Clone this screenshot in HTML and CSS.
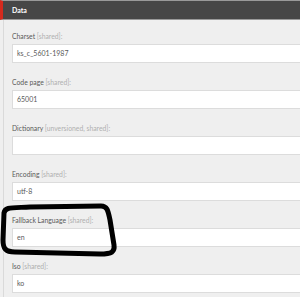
FILE: index.html
```html
<!DOCTYPE html>
<html lang="en">
<head>
    <meta charset="UTF-8">
    <meta name="viewport" content="width=device-width, initial-scale=1.0">
    <title>Data</title>
    <link rel="stylesheet" href="styles.css">
</head>
<body>
    <div class="section-header">Data</div>

    <div class="section-body">
        <div class="field">
            <div class="field-label">Charset <span class="muted">[shared]:</span></div>
            <div class="field-input">ks_c_5601-1987</div>
        </div>
        <div class="field">
            <div class="field-label">Code page <span class="muted">[shared]:</span></div>
            <div class="field-input">65001</div>
        </div>
        <div class="field">
            <div class="field-label">Dictionary <span class="muted">[unversioned, shared]:</span></div>
            <div class="field-input"></div>
        </div>
        <div class="field">
            <div class="field-label">Encoding <span class="muted">[shared]:</span></div>
            <div class="field-input">utf-8</div>
        </div>
        <div class="field">
            <div class="field-label">Fallback Language <span class="muted">[shared]:</span></div>
            <div class="field-input">en</div>
        </div>
        <div class="field">
            <div class="field-label">Iso <span class="muted">[shared]:</span></div>
            <div class="field-input">ko</div>
        </div>
    </div>

    <svg class="scribble" width="300" height="297" viewBox="0 0 300 297">
        <path d="M4 213 C5 207 10 208 30 207 L101 206 C107 206 108 210 110 220 L114 245 C115 252 112 254 100 254 L15 252 C5 252 3 248 3 240 Z"
              fill="none" stroke="#000" stroke-width="5" stroke-linejoin="round" stroke-linecap="round"/>
    </svg>
</body>
</html>
```

FILE: styles.css
```css
body {
    margin: 0;
    padding: 0;
    background-color: #efefef;
    font-family: Lato, "Open Sans", Arial, sans-serif;
    color: #5a5a5a;
    overflow: hidden;
    height: 297px;
    position: relative;
}
.section-header {
    height: 18px;
    line-height: 18px;
    background-color: #474747;
    border-top: 1px solid #9a9a9a;
    border-bottom: 1px solid #9a9a9a;
    border-left: 3px solid #d42a1e;
    padding-left: 9px;
    color: white;
    font-size: 7px;
    font-weight: bold;
}
.section-body {
    box-sizing: border-box;
    height: 277px;
    margin-left: 3px;
    border-left: 1px solid #dadada;
    padding: 10px 0 0 8px;
}
.field {
    margin-bottom: 13px;
}
.field:last-child {
    margin-bottom: 0;
}
.field-label {
    height: 12px;
    line-height: 12px;
    font-size: 6.8px;
    margin-bottom: 2px;
}
.muted {
    color: #b0b0b0;
}
.field-input {
    height: 17px;
    line-height: 17px;
    background-color: white;
    border: 1px solid #dcdcdc;
    border-right: none;
    padding-left: 4px;
    font-size: 7px;
}
.scribble {
    position: absolute;
    top: 0;
    left: 0;
    pointer-events: none;
}
```
